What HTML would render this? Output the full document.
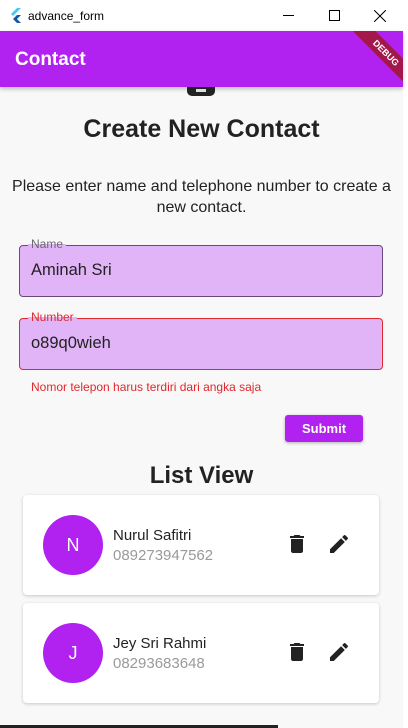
<!DOCTYPE html>
<html><head><style>
*{margin:0;padding:0;box-sizing:border-box}
body{width:408px;height:728px;overflow:hidden;background:#fff;font-family:"Liberation Sans",sans-serif;position:relative}
.abs{position:absolute}
.win{left:0;top:0;width:403px;height:728px;background:#f8f8f8}
.tb{left:0;top:0;width:403px;height:31px;background:#fff;font-size:12px;color:#000}
.bar{left:0;top:31px;width:403px;height:56px;background:#b121f0;box-shadow:0 2px 4px rgba(0,0,0,.25);overflow:hidden}
.field{left:19px;width:364px;height:52px;background:#e1b3f7;border-radius:4px;border:1px solid #6a4a7a}
.field .lab{position:absolute;top:-9px;left:8px;padding:0 3px;font-size:12px;background:linear-gradient(#f8f8f8 50%,#e1b3f7 50%);color:#6a6a6a}
.field .v{position:absolute;left:11px;top:15px;font-size:16.5px;color:#222}
.card{left:23px;width:356px;height:100px;background:#fff;border-radius:4px;box-shadow:0 1px 3px rgba(0,0,0,.2)}
.av{position:absolute;left:20px;top:20px;width:60px;height:60px;border-radius:50%;background:#b121f0;color:#fff;font-size:18px;text-align:center;line-height:60px}
.nm{position:absolute;left:90px;top:32px;font-size:15px;color:#222}
.ph{position:absolute;left:90px;top:52px;font-size:15px;color:#9a9a9a}
.ic{position:absolute;top:38px}
</style></head><body>
<div class="abs win"></div>
<div class="abs tb">
<svg class="abs" style="left:9px;top:8px" width="13" height="15" viewBox="0 0 13 15"><path d="M8 0h4L4 8 2 6z" fill="#44c8f5"/><path d="M8 7h4l-4 4 4 4H8L4 11z" fill="#0d5aa7"/></svg>
<span class="abs" style="left:28px;top:9px">advance_form</span>
<div class="abs" style="left:283px;top:15px;width:11px;height:1px;background:#000"></div>
<div class="abs" style="left:329px;top:10px;width:11px;height:11px;border:1px solid #000"></div>
<svg class="abs" style="left:374px;top:10px" width="12" height="12"><path d="M0 0L12 12M12 0L0 12" stroke="#000"/></svg>
</div>
<div class="abs bar">
<span class="abs" style="left:15px;top:18px;color:#fff;font-size:19px;font-weight:bold">Contact</span>
<div class="abs" style="left:336px;top:14px;width:100px;height:16px;background:#a3184a;transform:rotate(45deg);color:#fff;font-size:9px;font-weight:bold;text-align:center;line-height:16px">DEBUG</div>
</div>
<div class="abs" style="left:187px;top:87px;width:28px;height:9px;background:#222;border-radius:0 0 5px 5px"><div style="margin:2px auto;width:10px;height:3px;background:#ddd"></div></div>
<div class="abs" style="left:0;top:115px;width:403px;text-align:center;font-size:25px;font-weight:bold;color:#222">Create New Contact</div>
<div class="abs" style="left:0;top:176px;width:403px;text-align:center;font-size:16px;line-height:21px;color:#222">Please enter name and telephone number to create a<br>new contact.</div>
<div class="abs field" style="top:245px"><span class="lab">Name</span><span class="v">Aminah Sri</span></div>
<div class="abs field" style="top:318px;border-color:#e0282e"><span class="lab" style="color:#e0282e">Number</span><span class="v">o89q0wieh</span></div>
<div class="abs" style="left:31px;top:380px;font-size:12px;color:#e0282e">Nomor telepon harus terdiri dari angka saja</div>
<div class="abs" style="left:285px;top:415px;width:78px;height:27px;background:#b121f0;border-radius:3px;color:#fff;font-size:13px;font-weight:bold;text-align:center;line-height:27px;box-shadow:0 1px 3px rgba(0,0,0,.3)">Submit</div>
<div class="abs" style="left:0;top:462px;width:403px;text-align:center;font-size:24px;font-weight:bold;color:#222">List View</div>
<div class="abs card" style="top:495px"><div class="av">N</div><div class="nm">Nurul Safitri</div><div class="ph">089273947562</div>
<svg class="ic" style="left:262px;top:37px" width="24" height="24" viewBox="0 0 24 24"><path d="M6 19c0 1.1.9 2 2 2h8c1.1 0 2-.9 2-2V7H6v12zM19 4h-3.5l-1-1h-5l-1 1H5v2h14V4z" fill="#222"/></svg>
<svg class="ic" style="left:304px;top:37px" width="24" height="24" viewBox="0 0 24 24"><path d="M3 17.25V21h3.75L17.81 9.94l-3.75-3.75L3 17.25zM20.71 7.04a1 1 0 000-1.41l-2.34-2.34a1 1 0 00-1.41 0l-1.83 1.83 3.75 3.75 1.83-1.83z" fill="#222"/></svg></div>
<div class="abs card" style="top:603px"><div class="av">J</div><div class="nm">Jey Sri Rahmi</div><div class="ph">08293683648</div>
<svg class="ic" style="left:262px;top:37px" width="24" height="24" viewBox="0 0 24 24"><path d="M6 19c0 1.1.9 2 2 2h8c1.1 0 2-.9 2-2V7H6v12zM19 4h-3.5l-1-1h-5l-1 1H5v2h14V4z" fill="#222"/></svg>
<svg class="ic" style="left:304px;top:37px" width="24" height="24" viewBox="0 0 24 24"><path d="M3 17.25V21h3.75L17.81 9.94l-3.75-3.75L3 17.25zM20.71 7.04a1 1 0 000-1.41l-2.34-2.34a1 1 0 00-1.41 0l-1.83 1.83 3.75 3.75 1.83-1.83z" fill="#222"/></svg></div>
<div class="abs" style="left:0;top:725px;width:278px;height:3px;background:#222"></div>
</body></html>
